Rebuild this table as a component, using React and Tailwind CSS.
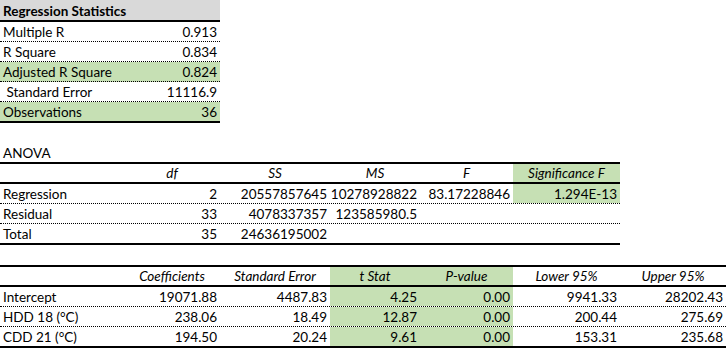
import React from "react"

const green = "bg-[#c6e0b4]"

const regStats = [
  { label: "Multiple R", value: "0.913" },
  { label: "R Square", value: "0.834" },
  { label: "Adjusted R Square", value: "0.824", hl: true },
  { label: "\u00a0Standard Error", value: "11116.9" },
  { label: "Observations", value: "36", hl: true },
]

const anovaRows = [
  ["Regression", "2", "20557857645", "10278928822", "83.17228846", "1.294E-13"],
  ["Residual", "33", "4078337357", "123585980.5", "", ""],
  ["Total", "35", "24636195002", "", "", ""],
]

const coefRows = [
  ["Intercept", "19071.88", "4487.83", "4.25", "0.00", "9941.33", "28202.43"],
  ["HDD 18 (°C)", "238.06", "18.49", "12.87", "0.00", "200.44", "275.69"],
  ["CDD 21 (°C)", "194.50", "20.24", "9.61", "0.00", "153.31", "235.68"],
]

// Excel-ish cell: text sits on the bottom of the row
function Cell({ children, align = "right", className = "" }) {
  const a =
    align === "left" ? "justify-start pl-[3px]" :
    align === "center" ? "justify-center" : "justify-end pr-[3px]"
  return (
    <div className={`flex items-end whitespace-nowrap ${a} ${className}`}>
      {children}
    </div>
  )
}

export default function App() {
  return (
    <div
      className="w-[726px] h-[349px] bg-white text-black text-[13.5px] leading-[17px]"
      style={{ fontFamily: "Lato, 'Liberation Sans', sans-serif" }}
    >
      {/* Regression statistics */}
      <div className="w-[220px]">
        <div className="h-[22px] bg-[#d9d9d9] border-b-2 border-black flex items-end pl-[3px] font-bold">
          Regression Statistics
        </div>
        {regStats.map((r, i) => (
          <div
            key={r.label}
            className={`flex justify-between items-end px-[3px] ${r.hl ? green : ""} ${
              i === regStats.length - 1
                ? "h-[21px] border-b-2 border-solid border-black"
                : "h-[20px] border-b border-dotted border-black"
            }`}
          >
            <span>{r.label}</span>
            <span>{r.value}</span>
          </div>
        ))}
      </div>

      {/* ANOVA */}
      <div className="mt-[19px] h-[20px] flex items-end pl-[3px]">ANOVA</div>
      <div className="w-[620px]">
        <div className="grid grid-cols-[124px_96px_110px_90px_93px_107px] h-[22px] border-y-2 border-black italic">
          <div />
          <Cell align="center">df</Cell>
          <Cell align="center">SS</Cell>
          <Cell align="center">MS</Cell>
          <Cell align="center">F</Cell>
          <Cell align="center" className={green}>Significance F</Cell>
        </div>
        {anovaRows.map((r, i) => (
          <div
            key={r[0]}
            className={`grid grid-cols-[124px_96px_110px_90px_93px_107px] ${
              i === anovaRows.length - 1
                ? "h-[21px] border-b-2 border-solid border-black"
                : "h-[20px] border-b border-dotted border-black"
            }`}
          >
            <Cell align="left">{r[0]}</Cell>
            <Cell>{r[1]}</Cell>
            <Cell>{r[2]}</Cell>
            <Cell className="pr-[1px]">{r[3]}</Cell>
            <Cell>{r[4]}</Cell>
            <Cell className={i === 0 ? green : ""}>{r[5]}</Cell>
          </div>
        ))}
      </div>

      {/* Coefficients */}
      <div className="mt-[20px] w-[726px]">
        <div className="grid grid-cols-[124px_96px_110px_90px_93px_107px_106px] h-[22px] border-y-2 border-black italic">
          <div />
          <Cell align="center">Coefficients</Cell>
          <Cell align="center">Standard Error</Cell>
          <Cell align="center" className={green}>t Stat</Cell>
          <Cell align="center" className={green}>P-value</Cell>
          <Cell align="center">Lower 95%</Cell>
          <Cell align="center">Upper 95%</Cell>
        </div>
        {coefRows.map((r, i) => (
          <div
            key={r[0]}
            className={`grid grid-cols-[124px_96px_110px_90px_93px_107px_106px] ${
              i === coefRows.length - 1
                ? "h-[21px] border-b-2 border-solid border-black"
                : "h-[20px] border-b border-dotted border-black"
            }`}
          >
            <Cell align="left">{r[0]}</Cell>
            <Cell>{r[1]}</Cell>
            <Cell>{r[2]}</Cell>
            <Cell className={green}>{r[3]}</Cell>
            <Cell className={green}>{r[4]}</Cell>
            <Cell>{r[5]}</Cell>
            <Cell>{r[6]}</Cell>
          </div>
        ))}
      </div>
    </div>
  )
}
